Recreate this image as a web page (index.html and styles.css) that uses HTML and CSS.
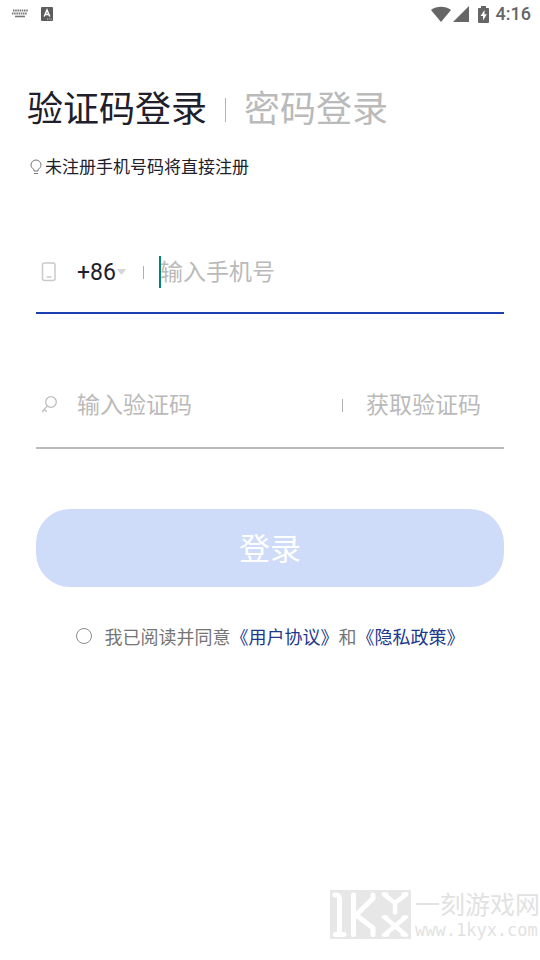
FILE: index.html
```html
<!DOCTYPE html>
<html lang="zh-CN">
<head>
<meta charset="utf-8">
<meta name="viewport" content="width=device-width, initial-scale=1">
<title>验证码登录</title>
<link rel="stylesheet" href="styles.css">
</head>
<body>
<header class="status">
  <div class="status-group status-left">
    <svg width="16" height="10" viewBox="0 0 16 10" fill="none" stroke="#777" stroke-width="2" aria-hidden="true">
      <path d="M1 1.5h15" stroke-dasharray="1.5 .7"/>
      <path d="M0 4.5h15" stroke-dasharray="1.5 .7"/>
      <path d="M3 7.5h10" stroke-width="1.6"/>
    </svg>
    <svg width="12" height="14" viewBox="0 0 12 14" aria-hidden="true">
      <rect width="12" height="14" rx="1" fill="#5c5c5c"/>
      <path d="M3.2 9.5 6 3l2.800 6.500M4.200 7.500h3.600" fill="none" stroke="#fff" stroke-width="1.500"/>
      <path d="M6 12h5" stroke="#ccc" stroke-dasharray="1 .8"/>
    </svg>
  </div>
  <div class="status-group status-right">
    <svg width="42" height="17" viewBox="0 0 42 17" fill="#666" aria-hidden="true">
      <path d="M0 4C6-.4 14-.4 20 4L10 16z"/>
      <path d="M38 0v16H22z"/>
    </svg>
    <svg width="11" height="17" viewBox="0 0 11 17" aria-hidden="true">
      <path d="M3 0h5v2h2q1 0 1 1v13q0 1-1 1H1q-1 0-1-1V3q0-1 1-1h2z" fill="#666"/>
      <path d="M6.500 4 2.500 10h2.500v4.500l3.800-6.300H6.500z" fill="#fff"/>
    </svg>
    <time class="clock">4:16</time>
  </div>
</header>

<main class="page">
  <nav class="tabs">
    <button class="tab tab-active" type="button">验证码登录</button>
    <span class="tab-divider"></span>
    <button class="tab" type="button">密码登录</button>
  </nav>
  <p class="tip">
    <svg width="12" height="16" viewBox="0 0 12 16" fill="none" stroke="#777" aria-hidden="true">
      <path d="M4 12v-1.500C2 9.300 1 7.800 1 6a5 5 0 0 1 10 0c0 1.800-1 3.300-3 4.500V12z"/>
      <path d="M4 14.500h4"/>
    </svg>
    <span>未注册手机号码将直接注册</span>
  </p>

  <form class="form">
    <div class="field field-phone">
      <svg class="field-icon" width="16" height="20" viewBox="0 0 16 20" fill="none" stroke="#cacaca" stroke-width="1.500" aria-hidden="true">
        <rect x="1.500" y="1" width="12.500" height="17.500" rx="2"/>
        <path d="M5.500 15h5"/>
      </svg>
      <select class="code-select" aria-label="国家区号"><option>+86</option></select>
      <svg class="arrow" width="9" height="6" viewBox="0 0 9 6" fill="#d6d6d6" aria-hidden="true"><path d="M1 0h7q1 0 .5 1L5.200 5.300q-.7.700-1.400 0L.5 1Q0 0 1 0z"/></svg>
      <span class="divider"></span>
      <div class="phone-box">
        <span class="caret"></span>
        <input class="input" type="tel" placeholder="输入手机号" aria-label="手机号">
      </div>
    </div>
    <div class="field field-code">
      <svg class="field-icon" width="16" height="20" viewBox="0 0 16 20" fill="none" stroke="#bdbdbd" stroke-width="1.300" aria-hidden="true">
        <circle cx="10" cy="7" r="5.300"/>
        <path d="M6.300 10.800 1.100 17M3.300 14.500l2.500 2.200"/>
      </svg>
      <input class="input" type="text" placeholder="输入验证码" aria-label="验证码">
      <span class="divider"></span>
      <button class="get-code" type="button">获取验证码</button>
    </div>
    <button class="submit" type="submit">登录</button>
    <div class="agree">
      <input class="agree-check" type="checkbox" id="agree">
      <label for="agree">我已阅读并同意<a href="#terms">《用户协议》</a>和<a href="#privacy">《隐私政策》</a></label>
    </div>
  </form>
</main>

<footer class="brand">
  <svg width="81" height="49" viewBox="0 0 81 49" role="img" aria-label="1KYX">
    <rect width="81" height="49" fill="#e7e7e7"/>
    <g fill="none" stroke="#fff" stroke-width="5" stroke-linecap="round" stroke-linejoin="round">
      <path d="M5 5q4.500-.5 4.500 4v35M5.500 44.500h8.500"/>
      <path d="M23.500 5v39.500M43 5v3.500L26 25l17 13v6.500"/>
      <path d="M54 4.500l11 8.500 11-8.500M65 13v9.500" stroke-width="4.500"/>
      <path d="M55 27.500l20 17M75 27.500l-20 17" stroke-width="4.500"/>
      <path d="M53 4h4M73 4h4M53 27h4M73 27h4M53 45h5M72 45h5" stroke-width="3"/>
    </g>
  </svg>
  <div class="brand-text">
    <span class="brand-name">一刻游戏网</span>
    <span class="brand-url">www.1kyx.com</span>
  </div>
</footer>
</body>
</html>
```
FILE: styles.css
```css
* {
  box-sizing: border-box;
}

body {
  display: flex;
  flex-direction: column;
  min-height: 100vh;
  margin: 0;
  background: #fff;
  color: #20202c;
  font-family: Roboto, "Noto Sans CJK SC", sans-serif;
}

button,
input,
select {
  padding: 0;
  border: 0;
  background: none;
  color: inherit;
  font: inherit;
  outline: none;
}

svg {
  display: block;
  flex: none;
}

.status {
  display: flex;
  justify-content: space-between;
  align-items: center;
  height: 28px;
  padding: 0 9px 0 12px;
}

.status-group {
  display: flex;
  align-items: center;
}

.status-left {
  gap: 13px;
}

.status-right {
  gap: 5px;
}

.clock {
  margin-left: 2px;
  color: #666;
  font-size: 18px;
  font-weight: 500;
  line-height: 28px;
}

.page {
  padding-top: 60px;
}

.tabs {
  display: flex;
  align-items: center;
  gap: 18px;
  padding: 0 27px;
}

.tab {
  color: #bababa;
  font-size: 36px;
  line-height: 44px;
  white-space: nowrap;
}

.tab-active {
  color: #20202c;
}

.tab-divider {
  width: 1px;
  height: 24px;
  background: #b4b4b4;
}

.tip {
  display: flex;
  align-items: center;
  gap: 3px;
  margin: 23px 30px 0;
  font-size: 17px;
  line-height: 24px;
}

.form {
  margin: 53px 36px 0;
}

.field {
  display: flex;
  align-items: center;
  box-sizing: content-box;
  font-size: 23px;
}

.field-phone {
  height: 80px;
  border-bottom: 2px solid #1c40b4;
}

.field-code {
  height: 84px;
  margin-top: 49px;
  border-bottom: 2px solid #bcbcbc;
}

.field-icon {
  margin: 0 20px 0 5px;
}

.code-select {
  width: 40px;
  appearance: none;
}

.arrow {
  margin-right: 17px;
}

.divider {
  flex: none;
  width: 1px;
  height: 13px;
  background: #b0b0b0;
}

.phone-box {
  position: relative;
  flex: 1;
  display: flex;
  margin-left: 16px;
}

.caret {
  position: absolute;
  top: 0;
  bottom: 0;
  left: -1px;
  width: 2px;
  background: #008577;
}

.input {
  flex: 1;
  min-width: 0;
  height: 32px;
}

.input::placeholder {
  color: #bababa;
  opacity: 1;
}

.get-code {
  margin: 0 23px;
  padding-bottom: 4px;
  color: #bababa;
  white-space: nowrap;
}

.submit {
  display: block;
  width: 100%;
  height: 78px;
  margin-top: 60px;
  padding-bottom: 4px;
  border-radius: 34px;
  background: #cedcf9;
  color: #fff;
  font-size: 31px;
}

.agree {
  display: flex;
  align-items: center;
  justify-content: center;
  gap: 13px;
  margin-top: 35px;
  color: #757575;
  font-family: "Noto Sans CJK SC", sans-serif;
  font-size: 18px;
  line-height: 28px;
}

.agree-check {
  flex: none;
  width: 16px;
  height: 16px;
  margin: 0;
  border: 1px solid #8c8c8c;
  border-radius: 50%;
  appearance: none;
}

.agree a {
  color: #20388c;
  text-decoration: none;
}

.brand {
  display: flex;
  align-items: center;
  justify-content: flex-end;
  gap: 4px;
  margin-top: auto;
  padding-bottom: 21px;
}

.brand-text {
  display: flex;
  flex-direction: column;
  color: #e2e2e2;
}

.brand-name {
  font-size: 25px;
  line-height: 32px;
}

.brand-url {
  font-family: "DejaVu Sans Mono", monospace;
  font-size: 17px;
  line-height: 17px;
}
```
